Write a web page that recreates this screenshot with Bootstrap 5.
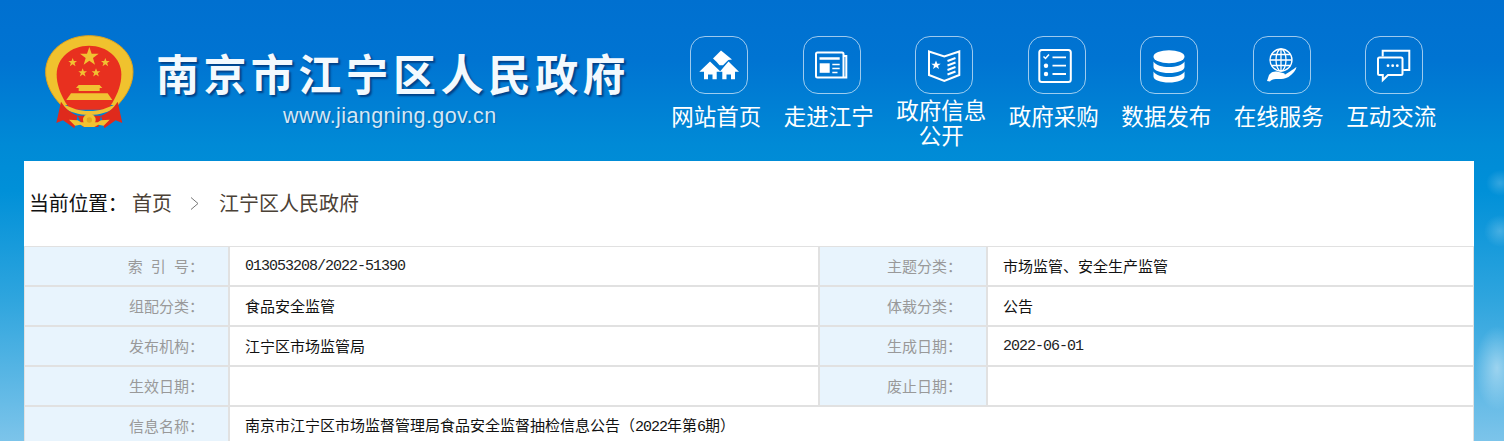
<!DOCTYPE html>
<html lang="zh-CN">
<head>
<meta charset="utf-8">
<title>南京市江宁区人民政府</title>
<link href="https://cdn.jsdelivr.net/npm/bootstrap@5.3.0/dist/css/bootstrap.min.css" rel="stylesheet">
<style>
html,body{height:441px;overflow:hidden}
body{font-family:"Liberation Sans","Noto Sans CJK SC",sans-serif;color:#000;background-color:#0090d8;
background-image:
 radial-gradient(ellipse 22px 42px at 1497px 368px,rgba(255,255,255,.42),rgba(255,255,255,0)),
 radial-gradient(ellipse 14px 13px at 1500px 183px,rgba(255,255,255,.2),rgba(255,255,255,0)),
 radial-gradient(ellipse 16px 16px at 1500px 231px,rgba(255,255,255,.22),rgba(255,255,255,0)),
 linear-gradient(180deg,#0070d0 0,#0074d2 60px,#008ad6 145px,#0090d8 190px,#2fa5de 300px,#7cc4ea 441px);
background-repeat:no-repeat}
.site-head{height:161px}
.emblem{width:89px;height:95px;margin:35px 0 0 45px;filter:blur(.4px);flex:none}
.brand{width:504px;margin-left:22px;padding-top:48px;flex:none}
.brand-name{font-size:43px;line-height:56px;font-weight:700;letter-spacing:4.4px;color:#f3f9fe;text-shadow:2px 2px 2px rgba(0,45,110,.75);white-space:nowrap}
.brand-url{font-size:21.5px;line-height:24px;letter-spacing:.42px;color:#d5e7f5;margin:0 0 0 127px;white-space:nowrap;text-shadow:1px 1px 1px rgba(0,50,120,.35)}
.main-nav{margin:36px 0 0 0}
.nav-cell{width:112.5px;color:#fff;text-decoration:none;text-align:center}
.nav-cell:hover{color:#fff}
.ico-wrap{padding-left:6px;display:flex;justify-content:center}
.ico-box{width:58px;height:58px;border:1.5px solid rgba(255,255,255,.62);border-radius:15px;display:block}
.ico-box svg{display:block;margin:-1.5px}
.nav-txt{display:block;font-size:22.5px;line-height:25px;margin-top:11px;white-space:nowrap}
.nav-txt.two{margin-top:5px}
.page-panel{margin:0 30px 0 24px;background:#fff}
.crumb-bar{height:85px;padding:1px 0 0 5px;font-size:20px}
.crumb-lead{color:#111;width:103px;white-space:nowrap;letter-spacing:-.3px}
.crumb-bar .breadcrumb{--bs-breadcrumb-divider:url("data:image/svg+xml,%3Csvg xmlns='http://www.w3.org/2000/svg' width='9' height='15'%3E%3Cpath d='M1 1.500 8 7.500 1 13.500' fill='none' stroke='%23777' stroke-width='1'/%3E%3C/svg%3E");--bs-breadcrumb-item-padding-x:18px;--bs-breadcrumb-margin-bottom:0;margin:0}
.crumb-bar .breadcrumb .breadcrumb-item+.breadcrumb-item::before{padding-right:20px}
.crumb-bar .breadcrumb a{color:#4b4136;text-decoration:none}
.info-grid{width:100%;border-collapse:separate;border-spacing:0;table-layout:fixed;font-size:15px}
.info-grid th,.info-grid td{height:40px;border:1px solid #e1e1e1;padding:1px 0 0;vertical-align:middle;white-space:nowrap;line-height:20px}
.info-grid th{background:#e8f4fd;color:#999;font-weight:400;text-align:right;padding-right:24px}
.info-grid td{padding-left:15px;color:#111}
.info-grid .spc{word-spacing:4px}
.info-grid .num{font-family:"Liberation Mono",monospace;letter-spacing:-1px;padding-top:2px;color:#222}
.info-grid .dig{font-family:"Liberation Mono",monospace;letter-spacing:-1px}
.col-a{width:205px}.col-b{width:590px}.col-c{width:168px}
</style>
</head>
<body>
<header class="site-head d-flex align-items-start">
  <svg class="emblem" viewBox="45 30 265 285" role="img" aria-label="国徽">
    <path d="M92 240C62 208 46 175 46 140 46 80 104 32 177 32s131 48 131 108c0 35-16 68-46 100z" fill="#f0c22e"/>
    <path d="M92 240C62 208 46 175 46 140 46 80 104 32 177 32s131 48 131 108c0 35-16 68-46 100" fill="none" stroke="#e0a21c" stroke-width="3"/>
    <path d="M79 148C79 99 122 62 176 62s97 37 97 86c0 30-10 56-26 84l-14 22H120l-15-22c-16-28-26-54-26-84z" fill="#e8301f"/>
    <g fill="#f1c232">
      <path d="M177 66l7 20h21l-17 13 6 20-17-12-17 12 6-20-17-13h21z"/>
      <path d="M127 99l3.500 9h9.500l-7.500 6 3 9.500-8.500-6-8.500 6 3-9.500-7.500-6h9.500z"/>
      <path d="M225 99l3.500 9h9.500l-7.500 6 3 9.500-8.500-6-8.500 6 3-9.500-7.500-6h9.500z"/>
      <path d="M157 130l3.500 9h9.500l-7.500 6 3 9.500-8.500-6-8.500 6 3-9.500-7.500-6h9.500z"/>
      <path d="M197 130l3.500 9h9.500l-7.500 6 3 9.500-8.500-6-8.500 6 3-9.500-7.500-6h9.500z"/>
      <path d="M145 180h63l8 9h-8v9h-63v-9h-8z"/>
      <path d="M122 205h110l14 20H108z"/>
      <path d="M96 236c30 14 50 22 81 22s52-8 81-22l4 8c-28 18-52 26-85 26s-57-8-85-26z"/>
    </g>
    <path d="M92 230c14 22 30 34 50 42l-10 38-34-24-20 8z M262 230c-14 22-30 34-50 42l10 38 34-24 20 8z" fill="#df2a1c"/>
    <path d="M142 272h70l-8 34h-46z" fill="#df2a1c"/>
    <path d="M116 284l26 2 10 6h50l10-6 26-2-18 18-16-3-12 7h-30l-12-7-16 3z" fill="#f1c232"/>
    <circle cx="177" cy="285" r="19" fill="#f1c232"/>
    <circle cx="177" cy="285" r="8" fill="#e2a81f"/>
  </svg>
  <div class="brand">
    <div class="brand-name">南京市江宁区人民政府</div>
    <p class="brand-url">www.jiangning.gov.cn</p>
  </div>
  <nav class="main-nav d-flex">
    <a class="nav-cell" href="#"><span class="ico-wrap"><span class="ico-box"><svg width="58" height="58" viewBox="0 0 58 58" fill="#fff">
      <path d="M23 22.500 31 14.500 42 23.500 38.300 24 33 29.300 29.500 29.300 26.500 25.800z"/>
      <path d="M20 25.500 30.700 35.700H26.700V43.300H22.500V38.500H18V43.300H14V35.700H9.300z"/>
      <path d="M38.500 25.500 49 35.700H45V43.300H41V38.500H36.500V43.300H32.300V35.700H29.800z"/>
    </svg></span></span><span class="nav-txt">网站首页</span></a>
    <a class="nav-cell" href="#"><span class="ico-wrap"><span class="ico-box"><svg width="58" height="58" viewBox="0 0 58 58" fill="none" stroke="#fff">
      <path d="M41.500 20H44.300V41.500H15.500A1.500 1.500 0 0 1 14 40V18A1.500 1.500 0 0 1 15.500 16.500H40A1.500 1.500 0 0 1 41.500 18V41.500" stroke-width="2"/>
      <path d="M17.500 22.500H37.700" stroke-width="2.500"/>
      <rect x="17.700" y="27.300" width="10" height="9.500" fill="#fff" stroke="none"/>
      <path d="M30.300 28.500H37.700M30.300 32.500H37.700M30.300 36.500H35.500" stroke-width="1.700"/>
    </svg></span></span><span class="nav-txt">走进江宁</span></a>
    <a class="nav-cell" href="#"><span class="ico-wrap"><span class="ico-box"><svg width="58" height="58" viewBox="0 0 58 58" fill="none" stroke="#fff">
      <path d="M14 15.500 29.300 20.500 44.300 15.500V39L29.300 45 14 39z" stroke-width="2"/>
      <path d="M21 24.500l1.300 3.200h3.400l-2.700 2.100 1 3.300-3-2-3 2 1-3.300-2.700-2.100h3.400z" fill="#fff" stroke="none"/>
      <path d="M32.500 25 40.500 22M32.500 29.500 40.500 26.500M32.500 34 40.500 31M32.500 38.500 40.500 35.500" stroke-width="2"/>
    </svg></span></span><span class="nav-txt two">政府信息<br>公开</span></a>
    <a class="nav-cell" href="#"><span class="ico-wrap"><span class="ico-box"><svg width="58" height="58" viewBox="0 0 58 58" fill="none" stroke="#fff">
      <rect x="12.300" y="14" width="31.500" height="32" rx="2.500" stroke-width="2"/>
      <path d="M16.500 20.500 18.500 22.500 22 18.500" stroke-width="1.500"/>
      <path d="M25.500 21.300H39M25.500 29.700H39M25.500 38H39" stroke-width="1.800"/>
      <circle cx="19" cy="29.700" r="2.200" fill="#fff" stroke="none"/>
      <circle cx="19" cy="38" r="2.200" fill="#fff" stroke="none"/>
    </svg></span></span><span class="nav-txt">政府采购</span></a>
    <a class="nav-cell" href="#"><span class="ico-wrap"><span class="ico-box"><svg width="58" height="58" viewBox="0 0 58 58" fill="#fff">
      <ellipse cx="29" cy="20.700" rx="15.500" ry="6.500"/>
      <path d="M13.500 25.500C16 29.500 22 31 29 31S42 29.500 44.500 25.500V31C44.500 34.500 37.500 37 29 37S13.500 34.500 13.500 31z"/>
      <path d="M13.500 35.500C16 39.500 22 41 29 41S42 39.500 44.500 35.500V40.500C44.500 44 37.500 46.500 29 46.500S13.500 44 13.500 40.500z"/>
    </svg></span></span><span class="nav-txt">数据发布</span></a>
    <a class="nav-cell" href="#"><span class="ico-wrap"><span class="ico-box"><svg width="58" height="58" viewBox="0 0 58 58" fill="none" stroke="#fff">
      <g stroke-width="1.300">
        <circle cx="29" cy="24" r="11"/>
        <ellipse cx="29" cy="24" rx="5" ry="11"/>
        <path d="M29 13V35M18 24H40M19.500 18.500H38.500M19.500 29.500H38.500"/>
      </g>
      <path d="M15 45 17 39C19 36 22 35 25 35.500L31 37C33.500 37.500 33.500 39.500 31 39.500H26.500 31.500L38 35.500C41 33.500 43 32 44.500 31 44 34 41 38 36.500 41 32 43.500 27 43 24 43 21 43 19 44 18 45.500z" fill="#fff" stroke="none"/>
    </svg></span></span><span class="nav-txt">在线服务</span></a>
    <a class="nav-cell" href="#"><span class="ico-wrap"><span class="ico-box"><svg width="58" height="58" viewBox="0 0 58 58" fill="none" stroke="#fff">
      <path d="M17.700 20.500V14.800H44.300V34H38.200" stroke-width="2"/>
      <path d="M14.500 21.500H36A1.500 1.500 0 0 1 37.500 23V37.500A1.500 1.500 0 0 1 36 39H23L17.800 44.200V39H14.500A1.500 1.500 0 0 1 13 37.500V23A1.500 1.500 0 0 1 14.500 21.500z" stroke-width="2"/>
      <circle cx="23" cy="29.700" r="1.400" fill="#fff" stroke="none"/>
      <circle cx="27.700" cy="29.700" r="1.400" fill="#fff" stroke="none"/>
      <circle cx="32.300" cy="29.700" r="1.400" fill="#fff" stroke="none"/>
    </svg></span></span><span class="nav-txt">互动交流</span></a>
  </nav>
</header>
<main class="page-panel">
  <div class="crumb-bar d-flex align-items-center">
    <span class="crumb-lead">当前位置：</span>
    <ol class="breadcrumb">
      <li class="breadcrumb-item"><a href="#">首页</a></li>
      <li class="breadcrumb-item"><a href="#">江宁区人民政府</a></li>
    </ol>
  </div>
  <table class="info-grid">
    <colgroup><col class="col-a"><col class="col-b"><col class="col-c"><col></colgroup>
    <tbody>
      <tr><th class="spc">索 引 号：</th><td class="num">013053208/2022-51390</td><th>主题分类：</th><td>市场监管、安全生产监管</td></tr>
      <tr><th>组配分类：</th><td>食品安全监管</td><th>体裁分类：</th><td>公告</td></tr>
      <tr><th>发布机构：</th><td>江宁区市场监管局</td><th>生成日期：</th><td class="num">2022-06-01</td></tr>
      <tr><th>生效日期：</th><td></td><th>废止日期：</th><td></td></tr>
      <tr><th>信息名称：</th><td colspan="3">南京市江宁区市场监督管理局食品安全监督抽检信息公告（<span class="dig">2022</span>年第<span class="dig">6</span>期）</td></tr>
    </tbody>
  </table>
</main>
<script src="https://cdn.jsdelivr.net/npm/bootstrap@5.3.0/dist/js/bootstrap.bundle.min.js"></script>
</body>
</html>
